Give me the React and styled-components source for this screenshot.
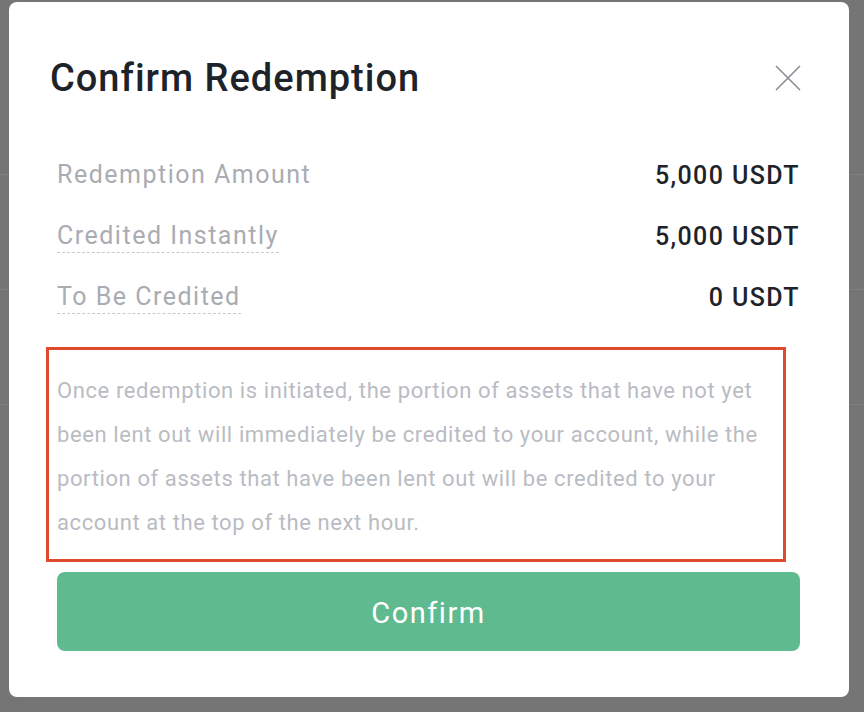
import React from 'react';
import styled, { createGlobalStyle } from 'styled-components';

const GlobalStyle = createGlobalStyle`
  html, body {
    margin: 0;
    padding: 0;
    background: #757575;
  }
  body {
    font-family: Roboto, "Noto Sans", sans-serif;
  }
`;

const Page = styled.div`
  position: relative;
  width: 864px;
  height: 712px;
  overflow: hidden;
  background: #757575;
`;

const BgRow = styled.div`
  height: 114px;
  border-bottom: 1px solid #808080;
  &:first-child {
    height: 174px;
  }
`;

const Overlay = styled.div`
  position: absolute;
  inset: 0;
  padding: 2px 15px 15px 9px;
  display: flex;
`;

const Modal = styled.div`
  width: 840px;
  height: 695px;
  box-sizing: border-box;
  background: #fff;
  border-radius: 8px;
  padding: 0 49px 0 48px;
  display: flex;
  flex-direction: column;
`;

const Header = styled.div`
  height: 143px;
  display: flex;
  align-items: center;
  justify-content: space-between;
  margin-left: -7px;
  margin-right: -2px;
  padding-top: 9px;
  box-sizing: border-box;
`;

const Title = styled.h2`
  margin: 0;
  font-size: 38px;
  font-weight: 500;
  color: #1e2329;
  letter-spacing: 1px;
`;

const CloseButton = styled.button`
  border: 0;
  background: none;
  padding: 0;
  width: 28px;
  height: 28px;
  cursor: pointer;
  display: flex;
`;

const Row = styled.div`
  height: 61px;
  display: flex;
  align-items: center;
  justify-content: space-between;
`;

const Label = styled.span`
  font-size: 25px;
  color: #a9acb2;
  letter-spacing: 1.5px;
  padding-bottom: 2px;
  border-bottom: ${({ dashed }) => (dashed ? '1.5px dashed #c6c9ce' : '1.5px solid transparent')};
`;

const Value = styled.span`
  font-size: 25px;
  color: #1e2329;
  font-weight: 500;
  letter-spacing: 1.4px;
`;

const Notice = styled.div`
  margin: 19px 14px 0 -11px;
  border: 3px solid #e04a2f;
  padding: 19px 0 14px 8px;
  font-size: 22px;
  line-height: 44px;
  color: #b9bcc2;
  letter-spacing: 0.6px;
`;

const ConfirmButton = styled.button`
  margin-top: 10px;
  height: 79px;
  border: 0;
  border-radius: 8px;
  background: #5fba90;
  color: #fff;
  font-family: inherit;
  font-size: 29px;
  letter-spacing: 1.5px;
  padding-top: 3px;
  cursor: pointer;
`;

const rows = [
  { label: 'Redemption Amount', value: '5,000 USDT' },
  { label: 'Credited Instantly', value: '5,000 USDT', dashed: true },
  { label: 'To Be Credited', value: '0 USDT', dashed: true },
];

export default function App() {
  return (
    <Page>
      <GlobalStyle />
      <BgRow />
      <BgRow />
      <BgRow />
      <Overlay>
        <Modal>
          <Header>
            <Title>Confirm Redemption</Title>
            <CloseButton aria-label="Close">
              <svg width="28" height="28" viewBox="0 0 28 28">
                <path d="M2 2L26 26M26 2L2 26" stroke="#8a8d93" strokeWidth="1.6" fill="none" />
              </svg>
            </CloseButton>
          </Header>
          {rows.map((r) => (
            <Row key={r.label}>
              <Label dashed={r.dashed}>{r.label}</Label>
              <Value>{r.value}</Value>
            </Row>
          ))}
          <Notice>
            Once redemption is initiated, the portion of assets that have not yet been lent out will
            immediately be credited to your account, while the portion of assets that have been lent
            out will be credited to your account at the top of the next hour.
          </Notice>
          <ConfirmButton>Confirm</ConfirmButton>
        </Modal>
      </Overlay>
    </Page>
  );
}
